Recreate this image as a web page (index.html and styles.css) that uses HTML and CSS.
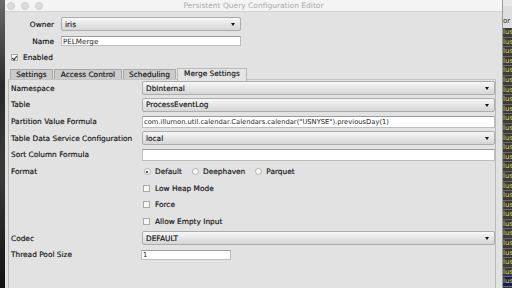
FILE: index.html
```html
<!DOCTYPE html>
<html lang="en">
<head>
  <meta charset="UTF-8">
  <title>Persistent Query Configuration Editor</title>
  <link rel="stylesheet" href="styles.css">
</head>
<body>

<div class="screen">
  <div class="side-left"></div>

  <div class="window">
    <div class="titlebar">
      <div class="lights"><span></span><span></span><span></span></div>
      <div class="title">Persistent Query Configuration Editor</div>
      <div></div>
    </div>

    <div class="body">
      <div class="head-form">
        <span class="head-label">Owner</span>
        <div class="combo">iris</div>
        <span class="head-label">Name</span>
        <div class="field">PELMerge</div>
      </div>

      <div class="enabled"><span class="check on"></span>Enabled</div>

      <div class="tabs">
        <div class="tab tab-settings">Settings</div>
        <div class="tab tab-access">Access Control</div>
        <div class="tab tab-sched">Scheduling</div>
        <div class="tab tab-merge active">Merge Settings</div>
      </div>

      <div class="panel">
        <span class="label">Namespace</span>
        <div class="cell"><div class="combo">DbInternal</div></div>

        <span class="label">Table</span>
        <div class="cell"><div class="combo">ProcessEventLog</div></div>

        <span class="label">Partition Value Formula</span>
        <div class="cell"><div class="field">com.illumon.util.calendar.Calendars.calendar("USNYSE").previousDay(1)</div></div>

        <span class="label">Table Data Service Configuration</span>
        <div class="cell"><div class="combo">local</div></div>

        <span class="label">Sort Column Formula</span>
        <div class="cell"><div class="field"></div></div>

        <span class="label">Format</span>
        <div class="cell radios">
          <span class="radio-item"><span class="radio on"></span>Default</span>
          <span class="radio-item"><span class="radio"></span>Deephaven</span>
          <span class="radio-item"><span class="radio"></span>Parquet</span>
        </div>

        <span class="label"></span>
        <div class="cell option"><span class="check"></span>Low Heap Mode</div>

        <span class="label"></span>
        <div class="cell option"><span class="check"></span>Force</div>

        <span class="label"></span>
        <div class="cell option"><span class="check"></span>Allow Empty Input</div>

        <span class="label">Codec</span>
        <div class="cell"><div class="combo">DEFAULT</div></div>

        <span class="label">Thread Pool Size</span>
        <div class="cell"><div class="field small">1</div></div>
      </div>
    </div>
  </div>

  <div class="side-right">
    <div class="log-top"></div>
    <div class="log-head">or</div>
    <div class="log">lus</div>
    <div class="log">lus</div>
    <div class="log">lus</div>
    <div class="log">lus</div>
    <div class="log">lus</div>
    <div class="log">lus</div>
    <div class="log">lus</div>
    <div class="log">lus</div>
    <div class="log">lus</div>
    <div class="log">lus</div>
    <div class="log">lus</div>
    <div class="log">lus</div>
    <div class="log">lus</div>
    <div class="log">lus</div>
    <div class="log">lus</div>
    <div class="log">lus</div>
    <div class="log">lus</div>
    <div class="log">lus</div>
    <div class="log">lus</div>
    <div class="log">lus</div>
    <div class="log">lus</div>
    <div class="log">lus</div>
    <div class="log">lus</div>
    <div class="log">lus</div>
    <div class="log">lus</div>
    <div class="log">lus</div>
    <div class="log selected">lus</div>
  </div>
</div>

</body>
</html>
```

FILE: styles.css
```css
body {
  margin: 0;
  font-family: "DejaVu Sans", sans-serif;
  font-size: 7.4px;
  color: #111;
}

.screen {
  display: flex;
  width: 512px;
  height: 288px;
  overflow: hidden;
  background: #222;
}

.side-left {
  width: 5px;
  background: linear-gradient(#6a6a6a, #2a2a2a 30%, #3a3a3a 60%, #111);
}

.window {
  width: 498px;
  display: flex;
  flex-direction: column;
  background: #e2e2e2;
}

.titlebar {
  display: grid;
  grid-template-columns: 1fr auto 1fr;
  align-items: center;
  height: 11px;
  background: #f4f4f4;
  border-bottom: 1px solid #d2d2d2;
}

.lights {
  display: flex;
  gap: 6px;
  padding-left: 2px;
}

.lights span {
  width: 6px;
  height: 6px;
  border-radius: 50%;
  background: #dcdcdc;
  border: 1px solid #cfcfcf;
}

.title {
  color: #ababab;
  font-size: 7.5px;
}

.body {
  flex: 1;
  display: flex;
  flex-direction: column;
  padding: 5px 6px 0 3px;
  -webkit-text-stroke: 0.15px #111;
}

.head-form {
  display: grid;
  grid-template-columns: 46px 180px;
  column-gap: 7px;
  row-gap: 5px;
  align-items: center;
}

.head-label {
  text-align: right;
}

.head-form .combo {
  height: 14px;
}

.head-form .field {
  height: 10px;
  font-size: 7.2px;
}

.enabled {
  display: flex;
  align-items: center;
  gap: 5px;
  margin: 7px 0 0 3px;
  height: 8px;
}

.check {
  display: inline-block;
  box-sizing: border-box;
  width: 7px;
  height: 7px;
  border: 1px solid #a9a9a9;
  background: #f7f7f7;
  position: relative;
  -webkit-text-stroke: 0;
}

.check.on::after {
  content: "";
  position: absolute;
  left: 1px;
  top: 0;
  width: 2px;
  height: 4px;
  border: solid #222;
  border-width: 0 1px 1px 0;
  transform: rotate(40deg);
}

.tabs {
  display: flex;
  align-items: flex-end;
  margin: 7px 0 0 2px;
  height: 12px;
}

.tab {
  box-sizing: border-box;
  height: 11px;
  line-height: 10px;
  text-align: center;
  background: #cbcbcb;
  border: 1px solid #a8a8a8;
  border-bottom: none;
  margin-right: 1px;
}

.tab.active {
  height: 13px;
  background: #e4e4e4;
  border-color: #b8b8b8;
  position: relative;
  z-index: 1;
  margin-bottom: -1px;
}

.tab-settings { width: 43px; }
.tab-access { width: 68px; }
.tab-sched { width: 53px; }
.tab-merge { width: 70px; }

.panel {
  flex: 1;
  display: grid;
  grid-template-columns: 133px 353px;
  grid-auto-rows: 16.65px;
  align-content: start;
  align-items: center;
  margin-top: -1px;
  border: 1px solid #b9b9b9;
  border-bottom: none;
  border-top-color: #c4c4c4;
}

.label {
  padding-left: 2px;
}

.cell {
  display: flex;
  align-items: center;
}

.combo {
  box-sizing: border-box;
  flex: 1;
  height: 14px;
  display: flex;
  align-items: center;
  padding-left: 3px;
  border: 1px solid #acacac;
  border-radius: 2px;
  background: linear-gradient(#f7f7f7, #e4e4e4 55%, #d6d6d6);
  position: relative;
}

.combo::after {
  content: "";
  position: absolute;
  right: 5px;
  top: 5px;
  border-left: 2.5px solid transparent;
  border-right: 2.5px solid transparent;
  border-top: 3px solid #111;
}

.field {
  box-sizing: border-box;
  flex: 1;
  height: 12px;
  display: flex;
  align-items: center;
  padding-left: 1px;
  background: #fff;
  border: 1px solid #bdbdbd;
  border-top-color: #9c9c9c;
  color: #2a2a2a;
  font-size: 6.75px;
  -webkit-text-stroke: 0;
}

.field.small {
  flex: none;
  width: 90px;
  height: 10px;
  margin-left: -1px;
}

.radio-item {
  display: flex;
  align-items: center;
  gap: 4px;
  margin-right: 10px;
}

.radio-item:first-child {
  margin-left: 2px;
}

.radio {
  box-sizing: border-box;
  width: 7px;
  height: 7px;
  border-radius: 50%;
  border: 1px solid #b0b0b0;
  background: #f8f8f8;
  position: relative;
}

.radio.on::after {
  content: "";
  position: absolute;
  left: 1.5px;
  top: 1.5px;
  width: 2px;
  height: 2px;
  border-radius: 50%;
  background: #222;
}

.option {
  gap: 5px;
  padding-left: 1px;
}

.side-right {
  width: 9px;
  display: flex;
  flex-direction: column;
  background: #333;
  border-left: 1px solid #9a9a9a;
  overflow: hidden;
  font-size: 7px;
}

.log-top {
  height: 6px;
  background: #e8e8e8;
}

.log-head {
  height: 22px;
  line-height: 30px;
  background: #dedede;
  color: #222;
  white-space: nowrap;
}

.log {
  height: 9.6px;
  flex: none;
  line-height: 9px;
  box-sizing: border-box;
  border-bottom: 1px solid #6a6a6a;
  background: #3c3c3c;
  color: #d9d95a;
  white-space: nowrap;
}

.log.selected {
  background: #1b1b5c;
}
```
